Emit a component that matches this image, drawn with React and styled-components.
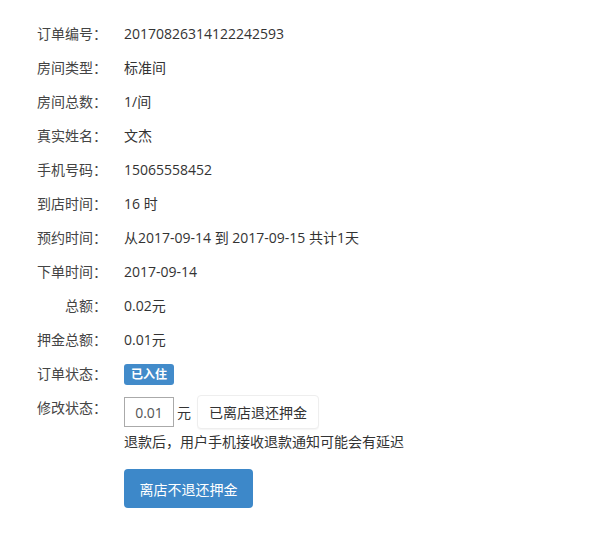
import React, { useState } from 'react';
import styled, { createGlobalStyle } from 'styled-components';

const GlobalStyle = createGlobalStyle`
  body {
    margin: 0;
    background: #fff;
    font-family: "Open Sans", "Noto Sans CJK SC", sans-serif;
    color: #333;
  }
`;

const Page = styled.div`
  padding: 17px 0 0 37px;
  font-size: 14px;
`;

const Row = styled.div`
  display: flex;
  align-items: ${p => (p.top ? 'flex-start' : 'center')};
  min-height: 34px;
`;

const Label = styled.div`
  width: 70px;
  flex-shrink: 0;
  text-align: right;
  color: #444;
  line-height: 34px;
  white-space: nowrap;
`;

const Value = styled.div`
  margin-left: 17px;
  line-height: 34px;
  white-space: nowrap;
`;

const Badge = styled.span`
  display: inline-block;
  background: #428bca;
  color: #fff;
  font-size: 12px;
  font-weight: bold;
  line-height: 21px;
  padding: 0 7px;
  border-radius: 3px;
`;

const Edit = styled.div`
  margin-left: 17px;
  padding-top: 4px;
`;

const Line = styled.div`
  display: flex;
  align-items: center;
`;

const Amount = styled.input`
  width: 50px;
  height: 30px;
  box-sizing: border-box;
  border: 1px solid #aaa;
  text-align: center;
  font: inherit;
  font-size: 14px;
  color: #555;
  padding: 0;
  outline: none;
`;

const Unit = styled.span`
  margin: 0 6px 0 3px;
`;

const PlainButton = styled.button`
  height: 34px;
  padding: 0 11px;
  background: #fff;
  border: 1px solid #eee;
  border-radius: 4px;
  box-shadow: 0 1px 1px rgba(0, 0, 0, 0.04);
  font: inherit;
  font-size: 14px;
  color: #333;
  cursor: pointer;
`;

const Note = styled.div`
  margin-top: 1px;
  line-height: 24px;
`;

const PrimaryButton = styled.button`
  margin-top: 15px;
  width: 129px;
  height: 39px;
  background: #3d88c9;
  border: none;
  border-radius: 4px;
  color: #fff;
  font: inherit;
  font-size: 14px;
  cursor: pointer;
`;

const info = [
  ['订单编号：', '20170826314122242593'],
  ['房间类型：', '标准间'],
  ['房间总数：', '1/间'],
  ['真实姓名：', '文杰'],
  ['手机号码：', '15065558452'],
  ['到店时间：', '16 时'],
  ['预约时间：', '从2017-09-14 到 2017-09-15 共计1天'],
  ['下单时间：', '2017-09-14'],
  ['总额：', '0.02元'],
  ['押金总额：', '0.01元'],
];

const App = () => {
  const [amount, setAmount] = useState('0.01');

  return (
    <Page>
      <GlobalStyle />
      {info.map(([k, v]) => (
        <Row key={k}>
          <Label>{k}</Label>
          <Value>{v}</Value>
        </Row>
      ))}
      <Row>
        <Label>订单状态：</Label>
        <Value>
          <Badge>已入住</Badge>
        </Value>
      </Row>
      <Row top>
        <Label>修改状态：</Label>
        <Edit>
          <Line>
            <Amount value={amount} onChange={e => setAmount(e.target.value)} />
            <Unit>元</Unit>
            <PlainButton>已离店退还押金</PlainButton>
          </Line>
          <Note>退款后，用户手机接收退款通知可能会有延迟</Note>
          <PrimaryButton>离店不退还押金</PrimaryButton>
        </Edit>
      </Row>
    </Page>
  );
};

export default App;
